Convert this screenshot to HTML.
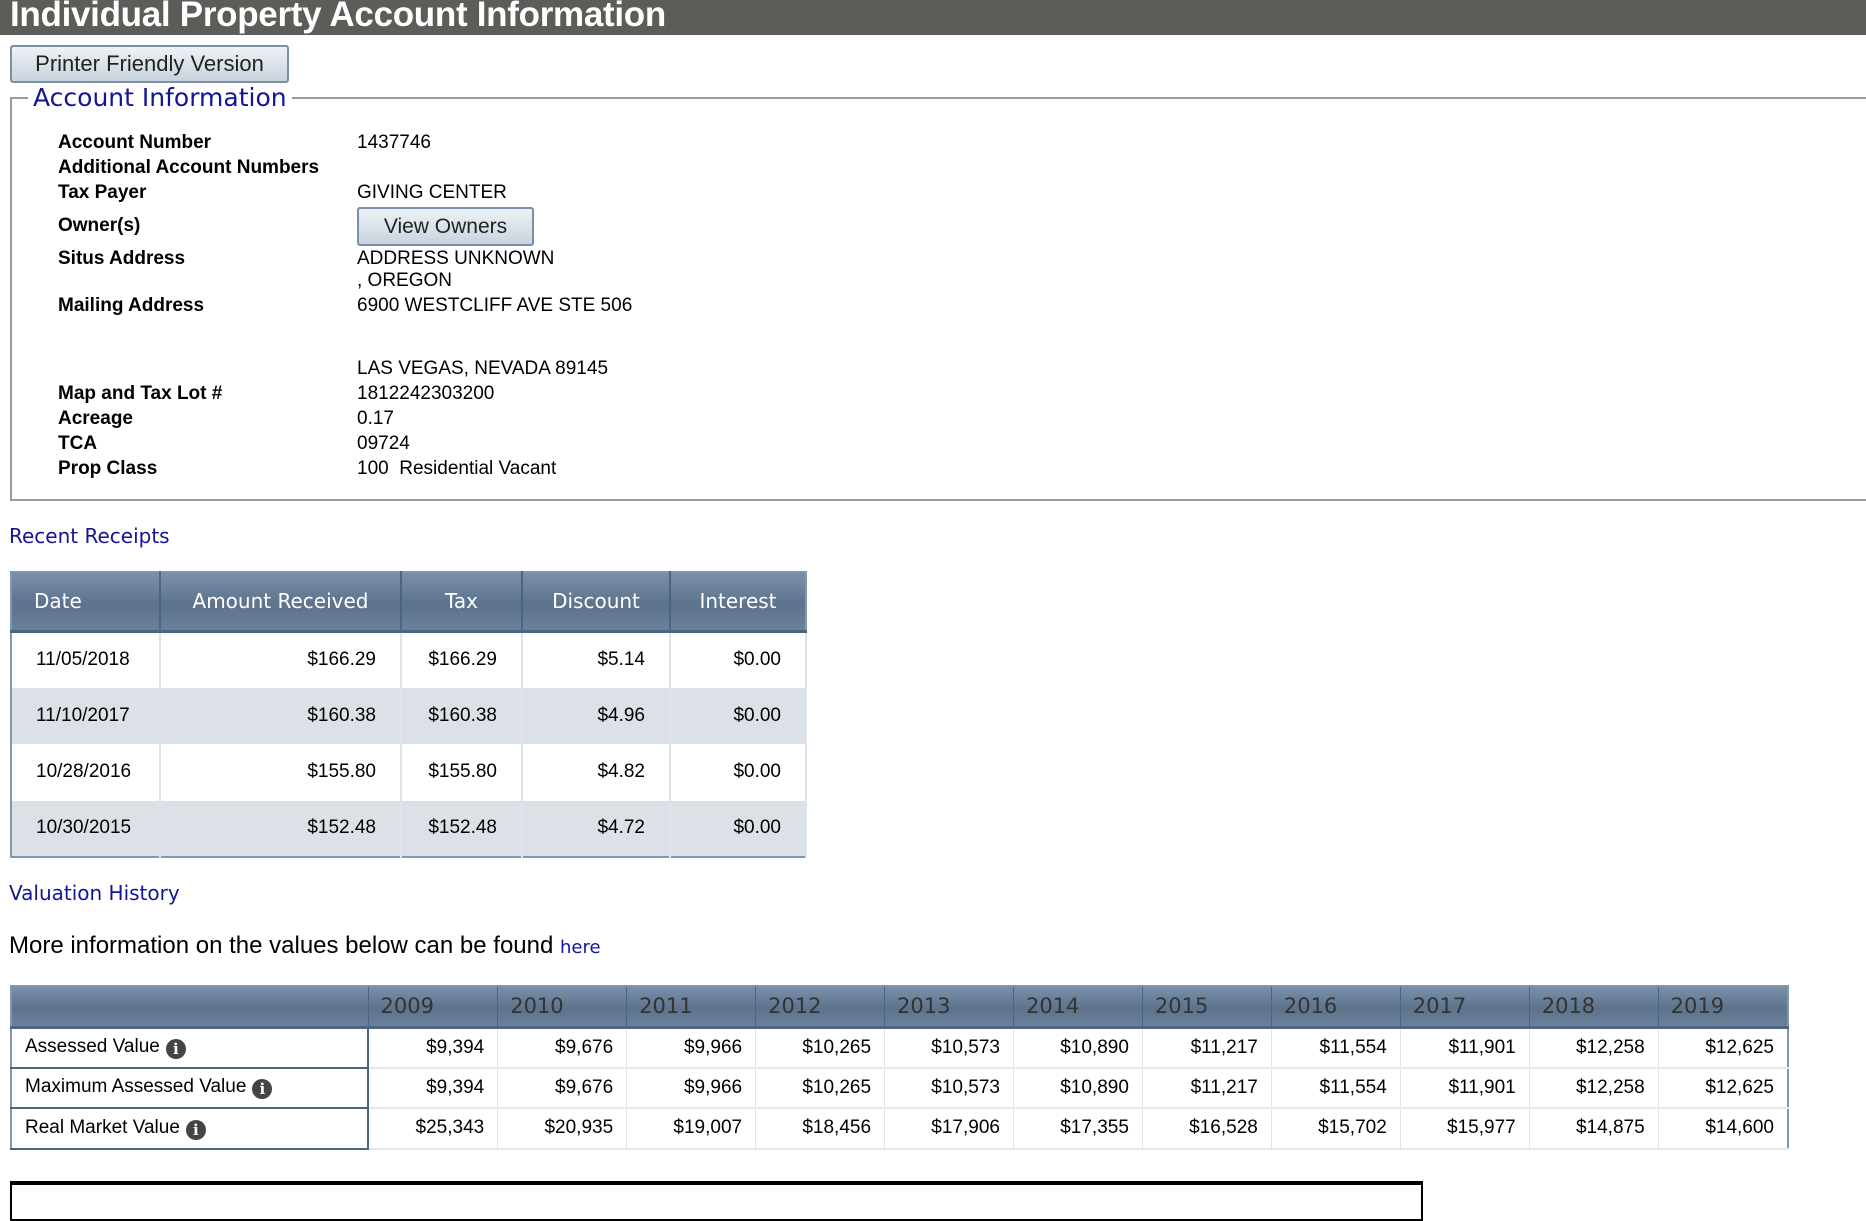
<!DOCTYPE html>
<html><head><meta charset="utf-8"><style>
*{margin:0;padding:0;box-sizing:border-box}
body{width:1866px;height:1200px;overflow:hidden;background:#fff;font-family:"Liberation Sans",Arial,sans-serif;color:#000;position:relative}
.abs{position:absolute}
.title{left:0;top:0;width:1866px;height:35px;background:#5b5d58;color:#fff;font-weight:bold;font-size:35px;line-height:30px;padding-left:10px;overflow:hidden;letter-spacing:-0.3px}
.btn{border:2px solid #7d8fa6;border-radius:3px;background:linear-gradient(#eef2f6,#c9d3de);color:#222;font-size:22px;text-align:center}
.fs{left:10px;top:97px;width:1900px;height:404px;border:2px solid #9a9a9a;border-right:none}
.legend{left:28px;top:83px;background:#fff;padding:0 5px;color:#141496;font-family:"DejaVu Sans",sans-serif;font-size:25px}
.lbl{left:58px;font-weight:bold;font-size:19px}
.val{left:357px;font-size:19px}
.h2{left:9px;color:#141496;font-family:"DejaVu Sans",sans-serif;font-size:20px}
table{border-collapse:collapse;position:absolute}
.rt{left:10px;top:571px;width:797px;border:2px solid #8196b0}
.rt th{background:linear-gradient(#7b90a8,#5d738d 55%,#6b819a);color:#fff;font-family:"DejaVu Sans",sans-serif;font-weight:normal;font-size:20px;height:59px;border-right:2px solid #4d6580;border-bottom:3px solid #4d6580}
.rt td{height:56.5px;font-size:19px;padding:0 24px;border-right:2px solid #dfe4ea}
.rt tr.a td{background:#dce1e8}
.vt{left:10px;top:985px;width:1779px;border:2px solid #8196b0}
.vt th{background:linear-gradient(#7b90a8,#5d738d 55%,#6b819a);color:#333;font-family:"DejaVu Sans",sans-serif;font-weight:normal;font-size:21px;height:41px;text-align:left;padding-left:12px;border-right:1px solid #4d6580;border-bottom:3px solid #4d6580}
.vt td{height:40.5px;font-size:19px;text-align:right;padding-right:13px;border-right:1px solid #dfe4ea;border-bottom:2px solid #e4e8ee}
.vt td.l{text-align:left;padding-left:13px;border:2px solid #4d6580;border-left:none}
.i{display:inline-block;width:20px;height:20px;border-radius:50%;background:#444;color:#fff;font-size:15px;font-weight:bold;text-align:center;line-height:20px;vertical-align:-2px;margin-left:6px;font-family:"DejaVu Serif",serif}
</style></head><body>
<div class="abs title">Individual Property Account Information</div>
<div class="abs btn" style="left:10px;top:45px;width:279px;height:38px;line-height:34px">Printer Friendly Version</div>
<div class="abs fs"></div>
<div class="abs legend">Account Information</div>
<div class="abs lbl" style="top:132px">Account Number</div><div class="abs val" style="top:132px">1437746</div>
<div class="abs lbl" style="top:157px">Additional Account Numbers</div>
<div class="abs lbl" style="top:182px">Tax Payer</div><div class="abs val" style="top:182px">GIVING CENTER</div>
<div class="abs lbl" style="top:215px">Owner(s)</div>
<div class="abs btn" style="left:357px;top:207px;width:177px;height:39px;line-height:35px;font-size:21px">View Owners</div>
<div class="abs lbl" style="top:248px">Situs Address</div><div class="abs val" style="top:248px">ADDRESS UNKNOWN</div>
<div class="abs val" style="top:270px">, OREGON</div>
<div class="abs lbl" style="top:295px">Mailing Address</div><div class="abs val" style="top:295px">6900 WESTCLIFF AVE STE 506</div>
<div class="abs val" style="top:358px">LAS VEGAS, NEVADA 89145</div>
<div class="abs lbl" style="top:383px">Map and Tax Lot #</div><div class="abs val" style="top:383px">1812242303200</div>
<div class="abs lbl" style="top:408px">Acreage</div><div class="abs val" style="top:408px">0.17</div>
<div class="abs lbl" style="top:433px">TCA</div><div class="abs val" style="top:433px">09724</div>
<div class="abs lbl" style="top:458px">Prop Class</div><div class="abs val" style="top:458px">100&nbsp; Residential Vacant</div>

<div class="abs h2" style="top:524px">Recent Receipts</div>
<table class="rt">
<tr><th style="width:149px;text-align:left;padding-left:22px">Date</th><th style="width:241px">Amount Received</th><th style="width:121px">Tax</th><th style="width:148px">Discount</th><th style="border-right:none">Interest</th></tr>
<tr><td>11/05/2018</td><td align="right">$166.29</td><td align="right">$166.29</td><td align="right">$5.14</td><td align="right">$0.00</td></tr>
<tr class="a"><td>11/10/2017</td><td align="right">$160.38</td><td align="right">$160.38</td><td align="right">$4.96</td><td align="right">$0.00</td></tr>
<tr><td>10/28/2016</td><td align="right">$155.80</td><td align="right">$155.80</td><td align="right">$4.82</td><td align="right">$0.00</td></tr>
<tr class="a"><td>10/30/2015</td><td align="right">$152.48</td><td align="right">$152.48</td><td align="right">$4.72</td><td align="right">$0.00</td></tr>
</table>

<div class="abs h2" style="top:881px">Valuation History</div>
<div class="abs" style="left:9px;top:932px;font-size:24px">More information on the values below can be found <span style="color:#141496;font-family:'DejaVu Sans',sans-serif;font-size:18px">here</span></div>

<table class="vt">
<tr><th style="width:357px"></th><th>2009</th><th>2010</th><th>2011</th><th>2012</th><th>2013</th><th>2014</th><th>2015</th><th>2016</th><th>2017</th><th>2018</th><th style="border-right:none">2019</th></tr>
<tr><td class="l">Assessed Value<span class="i">i</span></td><td>$9,394</td><td>$9,676</td><td>$9,966</td><td>$10,265</td><td>$10,573</td><td>$10,890</td><td>$11,217</td><td>$11,554</td><td>$11,901</td><td>$12,258</td><td>$12,625</td></tr>
<tr><td class="l">Maximum Assessed Value<span class="i">i</span></td><td>$9,394</td><td>$9,676</td><td>$9,966</td><td>$10,265</td><td>$10,573</td><td>$10,890</td><td>$11,217</td><td>$11,554</td><td>$11,901</td><td>$12,258</td><td>$12,625</td></tr>
<tr><td class="l">Real Market Value<span class="i">i</span></td><td>$25,343</td><td>$20,935</td><td>$19,007</td><td>$18,456</td><td>$17,906</td><td>$17,355</td><td>$16,528</td><td>$15,702</td><td>$15,977</td><td>$14,875</td><td>$14,600</td></tr>
</table>

<div class="abs" style="left:10px;top:1181px;width:1413px;height:40px;border:2px solid #000;border-top:4px solid #000"></div>
</body></html>
